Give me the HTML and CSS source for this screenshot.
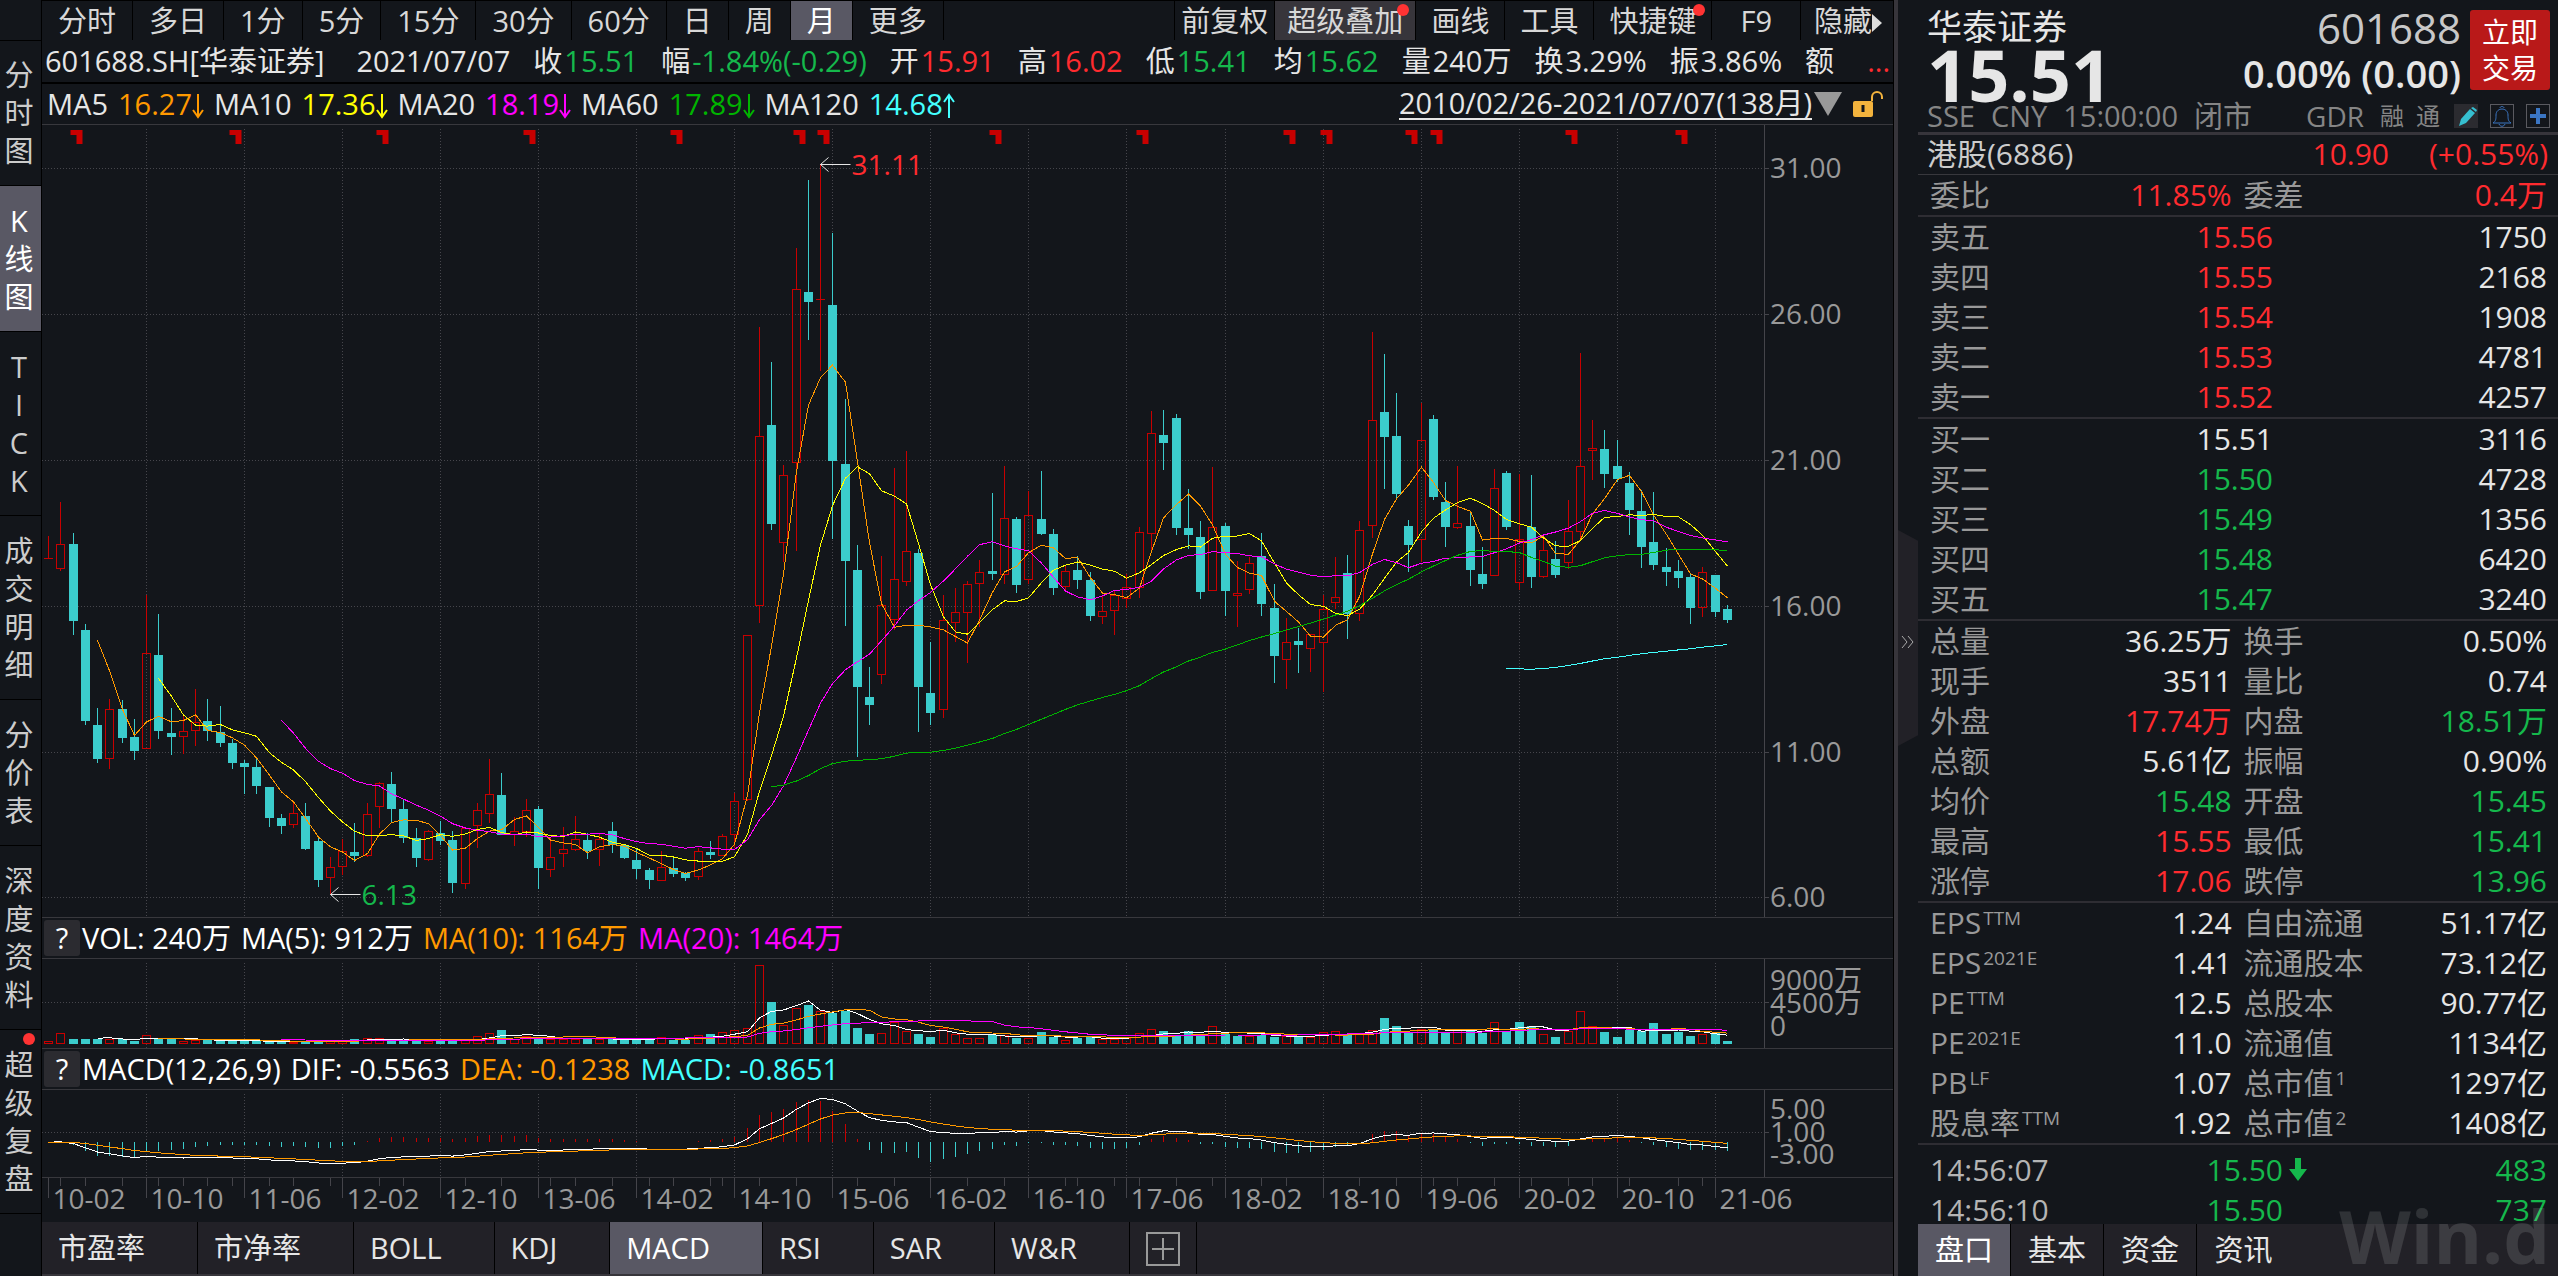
FILE: index.html
```html
<!DOCTYPE html>
<html lang="zh-CN">
<head>
    <meta charset="UTF-8">
    <meta name="viewport" content="width=device-width, initial-scale=1.0">
    <title>华泰证券 601688.SH</title>
    <link rel="stylesheet" href="styles.css">
</head>
<body>
    <svg class="defs" aria-hidden="true">
        <symbol id="down" viewBox="0 0 12 26"><path d="M6 1v23M1 17l5 7 5-7" fill="none" stroke="currentColor" stroke-width="2"/></symbol>
        <symbol id="up" viewBox="0 0 12 26"><path d="M6 25V2M1 9l5-7 5 7" fill="none" stroke="currentColor" stroke-width="2"/></symbol>
    </svg>

    <nav class="side">
        <button><span>分</span><span>时</span><span>图</span></button>
        <button class="active"><span>K</span><span>线</span><span>图</span></button>
        <button><span>T</span><span>I</span><span>C</span><span>K</span></button>
        <button><span>成</span><span>交</span><span>明</span><span>细</span></button>
        <button><span>分</span><span>价</span><span>表</span></button>
        <button><span>深</span><span>度</span><span>资</span><span>料</span></button>
        <button class="new"><span>超</span><span>级</span><span>复</span><span>盘</span></button>
    </nav>

    <main class="main">
        <div class="periods">
            <button>分时</button>
            <button>多日</button>
            <button>1分</button>
            <button>5分</button>
            <button>15分</button>
            <button>30分</button>
            <button>60分</button>
            <button>日</button>
            <button>周</button>
            <button class="active">月</button>
            <button>更多</button>
            <div class="tools">
                <button class="adjust">前复权</button>
                <button class="overlay new">超级叠加</button>
                <button>画线</button>
                <button>工具</button>
                <button class="new">快捷键</button>
                <button class="fkey">F9</button>
                <button class="hide">隐藏<svg width="10" height="18"><path d="M0 0l10 9-10 9z" fill="#ddd"/></svg></button>
            </div>
        </div>

        <div class="quote">
            <span>601688.SH[华泰证券]</span>
            <span class="date">2021/07/07</span>
            <span>收<b class="green">15.51</b></span>
            <span>幅<b class="green">-1.84%(-0.29)</b></span>
            <span>开<b class="red">15.91</b></span>
            <span>高<b class="red">16.02</b></span>
            <span>低<b class="green">15.41</b></span>
            <span>均<b class="green">15.62</b></span>
            <span>量<b>240万</b></span>
            <span>换<b>3.29%</b></span>
            <span>振<b>3.86%</b></span>
            <span>额</span>
            <span class="more red">...</span>
        </div>

        <div class="averages">
            <span>MA5</span><span class="ma5">16.27<svg width="12" height="26"><use href="#down"/></svg></span>
            <span>MA10</span><span class="ma10">17.36<svg width="12" height="26"><use href="#down"/></svg></span>
            <span>MA20</span><span class="ma20">18.19<svg width="12" height="26"><use href="#down"/></svg></span>
            <span>MA60</span><span class="ma60">17.89<svg width="12" height="26"><use href="#down"/></svg></span>
            <span>MA120</span><span class="ma120">14.68<svg width="12" height="26"><use href="#up"/></svg></span>
            <a class="range" href="#">2010/02/26-2021/07/07(138月)</a>
            <svg class="drop" width="28" height="24"><path d="M0 0h28L14 24z" fill="#999"/></svg>
            <svg class="lock" width="32" height="28"><path d="M20 11V7a5 5 0 0 1 10 0v2" fill="none" stroke="#f3b33d" stroke-width="2"/><rect x="1" y="11" width="20" height="16" rx="2" fill="#f3b33d"/><path d="M11 15v7" stroke="#13161b" stroke-width="3"/></svg>
        </div>

        <svg id="price" class="plot price"></svg>

        <div class="indicator">
            <button>?</button>
            <span>VOL: 240万</span>
            <span>MA(5): 912万</span>
            <span class="ma5">MA(10): 1164万</span>
            <span class="ma20">MA(20): 1464万</span>
        </div>
        <svg id="volume" class="plot volume"></svg>

        <div class="indicator">
            <button>?</button>
            <span>MACD(12,26,9)</span>
            <span>DIF: -0.5563</span>
            <span class="ma5">DEA: -0.1238</span>
            <span class="ma120">MACD: -0.8651</span>
        </div>
        <svg id="macd" class="plot macd"></svg>
        <svg id="dates" class="dates"></svg>

        <div class="studies">
            <button>市盈率</button>
            <button>市净率</button>
            <button>BOLL</button>
            <button>KDJ</button>
            <button class="active">MACD</button>
            <button>RSI</button>
            <button>SAR</button>
            <button>W&amp;R</button>
            <button class="add" aria-label="添加指标"><svg width="34" height="34"><path d="M1 1h32v32H1zM6 17h22M17 6v22" fill="none" stroke="#999" stroke-width="2"/></svg></button>
        </div>
    </main>

    <div class="splitter">
        <button aria-label="收起"><svg width="14" height="14"><path d="M1 1l5 6-5 6M7 1l5 6-5 6" fill="none" stroke="#aaa"/></svg></button>
    </div>

    <aside class="panel">
        <header class="head">
            <div class="info">
                <div class="line">
                    <h1>华泰证券</h1>
                    <span class="code">601688</span>
                </div>
                <div class="line last">
                    <span class="big">15.51</span>
                    <span class="change">0.00% (0.00)</span>
                </div>
            </div>
            <button class="trade">立即<br>交易</button>
            <div class="status">
                <span>SSE</span><span>CNY</span><span>15:00:00</span><span>闭市</span>
                <span class="gdr">GDR</span><span class="tag">融</span><span class="tag">通</span>
                <button aria-label="编辑" class="edit"><svg width="24" height="24"><path d="M4 21l2-7L15 4l5 4-9 10z" fill="#36bfd0"/><path d="M16 3l2-1 4 3-1 2z" fill="#36bfd0"/></svg></button>
                <button aria-label="提醒"><svg width="22" height="22"><path d="M2 18c3-2 3-4 3-8 0-4 3-6 6-6s6 2 6 6c0 4 0 6 3 8zM9 3c0-2 4-2 4 0M8 19c1 3 5 3 6 0" fill="none" stroke="#3b76c4" stroke-width="1"/></svg></button>
                <button aria-label="添加自选"><svg width="22" height="22"><path d="M11 3v16M3 11h16" stroke="#3b76c4" stroke-width="4"/></svg></button>
            </div>
        </header>

        <div class="hk"><span>港股(6886)</span><span class="red">10.90</span><span class="red pct">(+0.55%)</span></div>

        <table class="stats">
            <tr><th>委比</th><td class="red">11.85%</td><th>委差</th><td class="red">0.4万</td></tr>
        </table>
        <table class="book">
            <tr><th>卖五</th><td class="red">15.56</td><td>1750</td></tr>
            <tr><th>卖四</th><td class="red">15.55</td><td>2168</td></tr>
            <tr><th>卖三</th><td class="red">15.54</td><td>1908</td></tr>
            <tr><th>卖二</th><td class="red">15.53</td><td>4781</td></tr>
            <tr><th>卖一</th><td class="red">15.52</td><td>4257</td></tr>
        </table>
        <table class="book">
            <tr><th>买一</th><td>15.51</td><td>3116</td></tr>
            <tr><th>买二</th><td class="green">15.50</td><td>4728</td></tr>
            <tr><th>买三</th><td class="green">15.49</td><td>1356</td></tr>
            <tr><th>买四</th><td class="green">15.48</td><td>6420</td></tr>
            <tr><th>买五</th><td class="green">15.47</td><td>3240</td></tr>
        </table>
        <table class="stats">
            <tr><th>总量</th><td>36.25万</td><th>换手</th><td>0.50%</td></tr>
            <tr><th>现手</th><td>3511</td><th>量比</th><td>0.74</td></tr>
            <tr><th>外盘</th><td class="red">17.74万</td><th>内盘</th><td class="green">18.51万</td></tr>
            <tr><th>总额</th><td>5.61亿</td><th>振幅</th><td>0.90%</td></tr>
            <tr><th>均价</th><td class="green">15.48</td><th>开盘</th><td class="green">15.45</td></tr>
            <tr><th>最高</th><td class="red">15.55</td><th>最低</th><td class="green">15.41</td></tr>
            <tr><th>涨停</th><td class="red">17.06</td><th>跌停</th><td class="green">13.96</td></tr>
        </table>
        <table class="stats">
            <tr><th>EPS<sup>TTM</sup></th><td>1.24</td><th>自由流通</th><td>51.17亿</td></tr>
            <tr><th>EPS<sup>2021E</sup></th><td>1.41</td><th>流通股本</th><td>73.12亿</td></tr>
            <tr><th>PE<sup>TTM</sup></th><td>12.5</td><th>总股本</th><td>90.77亿</td></tr>
            <tr><th>PE<sup>2021E</sup></th><td>11.0</td><th>流通值</th><td>1134亿</td></tr>
            <tr><th>PB<sup>LF</sup></th><td>1.07</td><th>总市值<sup>1</sup></th><td>1297亿</td></tr>
            <tr><th>股息率<sup>TTM</sup></th><td>1.92</td><th>总市值<sup>2</sup></th><td>1408亿</td></tr>
        </table>
        <div class="ticks">
            <table>
                <tr><th>14:56:07</th><td class="green">15.50</td><td class="arrow"><svg width="18" height="24"><path d="M6 0h6v11h6l-9 12-9-12h6z" fill="#15b84c"/></svg></td><td class="green">483</td></tr>
                <tr><th>14:56:10</th><td class="green">15.50</td><td class="arrow"></td><td class="green">737</td></tr>
            </table>
        </div>
        <div class="tabs">
            <button class="active">盘口</button>
            <button>基本</button>
            <button>资金</button>
            <button>资讯</button>
        </div>
        <div class="watermark">Win.d</div>
    </aside>

    <script src="chart.js"></script>
</body>
</html>
```
FILE: styles.css
```css
* {
    box-sizing: border-box;
}
body {
    margin: 0;
    height: 100vh;
    display: flex;
    overflow: hidden;
    background-color: #13161b;
    color: #e6e6e6;
    font-family: "Open Sans", "Noto Sans CJK SC", sans-serif;
    font-size: 29px;
    line-height: 38px;
    white-space: nowrap;
}
button {
    padding: 0;
    border: none;
    background: none;
    color: inherit;
    font: inherit;
    cursor: pointer;
}
b {
    font-weight: normal;
}
.defs {
    display: none;
}
.red {
    color: #ff2b2f;
}
.green {
    color: #15b84c;
}
.ma5 {
    color: #ff9900;
}
.ma10 {
    color: #ffff00;
}
.ma20 {
    color: #ff00ff;
}
.ma60 {
    color: #00b400;
}
.ma120 {
    color: #44ffff;
}
.new {
    position: relative;
}
.new::after {
    content: "";
    position: absolute;
    top: 3px;
    right: 6px;
    width: 12px;
    height: 12px;
    border-radius: 50%;
    background-color: #ff3333;
}

/* left navigation */
.side {
    flex: 0 0 42px;
    padding-top: 40px;
    border-right: 1px solid #000;
    display: flex;
    flex-direction: column;
    color: #ccc;
}
.side button {
    padding: 16px 3px 15px 0;
    border-bottom: 1px solid #000;
    display: flex;
    flex-direction: column;
    align-items: center;
}
.side button:first-child {
    border-top: 1px solid #000;
    padding-top: 15px;
}
.active,
.side .active {
    background-color: #595864;
    color: #fff;
}

/* chart column */
.main {
    flex: 1;
    min-width: 0;
    display: flex;
    flex-direction: column;
}
.periods {
    height: 41px;
    padding-bottom: 1px;
    border-top: 1px solid #000;
    display: flex;
    color: #d8d8d8;
}
.periods button {
    padding: 0 16px;
    border-right: 1px solid #000;
}
.tools {
    margin-left: auto;
    display: flex;
}
.periods .tools button {
    padding: 0 15px;
    border-right: none;
    border-left: 1px solid #000;
}
.periods .tools .adjust {
    padding: 0 6px;
}
.periods .tools .overlay {
    padding: 0 12px;
    background-color: #37353b;
}
.periods .tools .fkey {
    padding: 0 28px;
}
.periods .tools .hide {
    padding: 0 11px 0 13px;
}
.quote {
    height: 43px;
    padding: 1px 3px 0;
    border-bottom: 2px solid #000;
    display: flex;
    gap: 23px;
}
.quote b {
    margin-left: 2px;
}
.quote .date {
    margin: 0 0 0 9px;
}
.quote .more {
    margin-left: auto;
}
.averages {
    height: 41px;
    padding: 0 9px 0 5px;
    border-bottom: 1px solid #38383d;
    display: flex;
    align-items: center;
    gap: 10px;
}
.averages span svg {
    vertical-align: -4px;
}
.range {
    margin-left: auto;
    color: inherit;
    line-height: 30px;
    text-decoration: none;
    border-bottom: 2px solid #e6e6e6;
}
.averages .drop {
    margin-left: -8px;
}
.plot,
.dates {
    display: block;
    width: 100%;
    font-size: 28px;
}
.price {
    flex: 1;
    min-height: 0;
}
.indicator {
    height: 42px;
    padding: 0 2px;
    border: solid #38383d;
    border-width: 1px 0;
    display: flex;
    align-items: center;
    gap: 10px;
    color: #fff;
}
.indicator button {
    width: 36px;
    height: 36px;
    margin-right: -8px;
    border-radius: 3px;
    background-color: #2b2b30;
    line-height: 36px;
}
.volume {
    height: 89px;
}
.macd {
    height: 87px;
}
.dates {
    height: 45px;
    border-top: 1px solid #38383d;
}
.studies {
    height: 54px;
    border-bottom: 2px solid #37353b;
    background-color: #222127;
    display: flex;
}
.studies button {
    padding: 0 52px 0 16px;
    border-right: 1px solid #000;
}
.studies .add {
    padding: 9px 16px 0;
}

/* chart drawing */
.axis {
    fill: #999;
}
.frame {
    stroke: #44444a;
}
.grid {
    stroke: #46464c;
    stroke-dasharray: 1 2;
}
.rise {
    fill: none;
    stroke: #c80000;
}
.flag {
    fill: #c80000;
}
.fall {
    stroke: #3bcccc;
}
.solid {
    fill: #3bcccc;
}
.curve {
    fill: none;
    stroke: currentColor;
    shape-rendering: crispEdges;
}
.white {
    color: #fff;
}
.pointer {
    fill: none;
    stroke: #e6e6e6;
}
.high {
    fill: #ff2b2f;
}
.low {
    fill: #15b84c;
}

/* splitter between chart and quote panel */
.splitter {
    flex: 0 0 25px;
    border-left: 1px solid #000;
    display: flex;
    align-items: center;
    background: linear-gradient(#37353b, #37353b) 0 0 / 4px 100% no-repeat;
}
.splitter button {
    width: 20px;
    height: 216px;
    margin-left: 4px;
    background-color: #222127;
    clip-path: polygon(0 0, 100% 5%, 100% 95%, 0 100%);
}

/* quote panel */
.panel {
    position: relative;
    flex: 0 0 640px;
    display: flex;
    flex-direction: column;
    font-size: 30px;
    line-height: 40px;
}
.head {
    height: 135px;
    padding: 6px 8px 0 9px;
    border-bottom: 3px solid #37353b;
    display: grid;
    grid-template-columns: 1fr 80px;
    grid-template-rows: 92px 1fr;
    column-gap: 9px;
}
.line {
    display: flex;
    justify-content: space-between;
    height: 44px;
}
.line.last {
    line-height: 48px;
}
h1 {
    margin: 0;
    font-size: 35px;
    font-weight: normal;
    line-height: 42px;
}
.code {
    font-size: 42px;
    line-height: 44px;
    color: #c8c8c8;
}
.big {
    font-size: 72px;
    font-weight: bold;
}
.change {
    font-size: 38px;
    font-weight: 600;
    line-height: 46px;
}
.trade {
    height: 80px;
    margin-top: 4px;
    border-radius: 3px;
    background-color: #b91919;
    color: #fff;
    font-size: 28px;
    line-height: 36px;
}
.status {
    grid-column: 1 / 3;
    display: flex;
    align-items: center;
    gap: 16px;
    font-size: 29px;
    line-height: 36px;
    color: #858585;
}
.status .gdr {
    margin-left: auto;
    font-size: 28px;
}
.status .tag {
    margin-right: -4px;
    font-size: 24px;
}
.status button {
    width: 24px;
    height: 24px;
    margin-right: -4px;
    border: 1px solid #5a5a60;
    line-height: 0;
}
.status .edit {
    margin-left: 2px;
    background-color: #2b2b30;
    border-color: #2b2b30;
}
.status button:last-child {
    margin-right: 0;
}
.hk {
    height: 40px;
    padding: 0 10px 0 9px;
    border-bottom: 1px solid #38383d;
    display: flex;
    line-height: 38px;
    color: #ccc;
}
.hk .red:nth-child(2) {
    margin-left: auto;
}
.hk .pct {
    margin-left: 40px;
}
table {
    width: 100%;
    border-collapse: collapse;
    table-layout: fixed;
}
th,
td {
    height: 40px;
    padding: 0;
    font-weight: normal;
    text-align: right;
}
th {
    padding-left: 12px;
    text-align: left;
    color: #999;
}
td:last-child {
    padding-right: 11px;
}
.stats,
.book {
    flex: none;
    border-bottom: 2px solid #2e2d33;
}
.stats th {
    width: 30%;
}
.stats td {
    width: 19%;
}
.stats td:last-child {
    width: 21%;
}
.book th,
.ticks th {
    width: 180px;
}
.book td:nth-child(2) {
    width: 175px;
}
sup {
    margin-left: 2px;
    font-size: 19px;
    line-height: 0;
    vertical-align: 9px;
}
.ticks {
    flex: 1;
    min-height: 0;
    padding-top: 5px;
    overflow: hidden;
}
.ticks td:nth-child(2) {
    width: 185px;
}
.ticks .arrow {
    width: 24px;
    line-height: 0;
}
.ticks th {
    color: #b4b4b4;
}
.tabs {
    flex: 0 0 52px;
    display: flex;
    background-color: #222127;
}
.tabs button {
    width: 93px;
    border-right: 1px solid #000;
    font-size: 29px;
}
.tabs button:last-child {
    border-right: none;
}
.watermark {
    position: absolute;
    right: 8px;
    bottom: 10px;
    font-size: 74px;
    font-weight: bold;
    line-height: 60px;
    color: rgba(255, 255, 255, 0.12);
    pointer-events: none;
}
```
FILE: chart.js
```js
// One month per row: direction, high, body top, body bottom, low.
// Levels are stored as scale units counted downwards, 29.17 units to 1 yuan.
const months = [
    [1,536,558,558,558],[1,502,544,568,571],[0,533,544,621,635],[0,624,630,721,725],[0,708,725,759,763],[1,699,709,758,769],
    [0,700,709,738,743],[0,719,737,751,760],[1,595,653,748,749],[0,614,655,731,739],[0,708,733,737,755],[1,716,731,736,754],
    [1,689,722,730,746],[0,699,721,731,741],[0,706,732,743,747],[0,739,743,763,769],[0,760,763,767,794],[0,758,767,786,794],
    [0,787,787,818,827],[0,814,818,826,834],[1,803,813,824,828],[0,803,816,849,850],[0,838,841,880,887],[1,857,867,877,894],
    [1,839,851,866,875],[0,823,852,856,862],[1,803,814,855,857],[1,782,783,806,828],[0,772,784,809,823],[0,799,809,838,843],
    [0,828,838,858,867],[1,830,831,859,861],[0,821,833,841,845],[0,831,840,883,893],[1,827,828,883,889],[1,803,810,825,848],
    [1,759,794,813,823],[0,773,795,835,835],[1,817,831,834,846],[1,799,810,831,837],[0,806,809,868,889],[1,838,857,869,877],
    [1,827,849,853,867],[1,816,839,849,851],[0,833,840,851,859],[1,833,839,849,866],[0,822,831,845,853],[0,844,845,858,859],
    [0,849,860,869,879],[0,868,870,880,889],[1,851,867,880,880],[0,857,868,874,877],[0,872,873,878,881],[1,848,851,876,880],
    [0,841,852,855,859],[1,834,836,855,856],[1,793,801,834,848],[1,635,635,799,801],[1,327,436,605,623],[0,362,425,524,530],
    [1,465,475,542,562],[1,248,289,462,551],[0,180,292,302,340],[1,164,299,299,371],[0,233,305,461,539],[0,399,464,561,626],
    [0,545,570,687,757],[0,667,697,705,725],[1,556,605,674,684],[1,468,579,619,630],[1,451,551,581,586],[0,549,553,687,732],
    [0,642,693,713,725],[1,595,620,709,718],[1,588,612,622,642],[1,581,584,612,663],[1,560,572,583,627],[0,493,571,574,580],
    [1,466,518,574,584],[0,517,519,585,593],[1,491,515,579,584],[0,471,519,534,535],[0,529,534,588,595],[1,565,571,586,592],
    [0,556,570,580,589],[0,572,580,616,621],[1,595,611,616,624],[1,591,595,610,635],[1,574,587,598,608],[1,527,532,587,598],
    [1,411,433,533,552],[0,410,435,443,470],[0,414,418,528,535],[0,489,528,535,549],[0,521,537,592,599],[1,467,527,590,590],
    [0,523,526,591,616],[1,561,593,595,627],[1,557,563,589,594],[0,533,556,604,616],[0,584,608,656,683],[1,618,642,659,689],
    [0,628,641,645,673],[1,634,634,648,672],[1,595,609,642,692],[1,557,597,602,609],[0,555,573,614,639],[1,521,530,613,621],
    [1,332,420,525,538],[0,354,412,437,489],[0,393,436,494,500],[0,520,526,545,572],[1,403,440,539,562],[0,415,419,497,500],
    [0,482,502,527,547],[1,466,523,527,529],[0,513,526,570,586],[0,547,574,584,589],[1,469,488,575,575],[0,471,473,527,530],
    [1,474,539,582,590],[0,475,527,577,588],[1,539,550,576,578],[0,541,559,575,578],[1,500,531,562,569],[1,353,466,531,539],
    [1,420,448,450,480],[0,430,449,474,488],[0,440,466,479,482],[0,472,483,510,535],[0,490,511,547,568],[0,492,542,565,570],
    [0,548,567,572,586],[0,560,571,578,588],[0,573,577,608,624],[1,567,572,607,617],[0,575,575,612,617],[0,605,609,620,623]
];

// monthly volume, in units of 108万
const volumes = [
    3,11,5,5,5,5,5,3,9,5,5,3,4,4,3,3,3,3,2,2,2,3,3,3,3,5,6,6,4,4,4,3,3,3,5,8,11,14,5,8,6,5,5,5,5,5,5,4,5,5,
    7,4,4,9,10,12,14,16,79,42,19,36,39,33,31,33,16,10,11,22,13,10,7,16,10,6,6,9,9,6,6,12,7,4,6,7,5,5,6,11,
    15,13,8,13,10,18,10,8,8,9,7,8,8,7,12,13,10,10,14,26,18,11,15,14,11,14,13,11,22,13,22,18,10,7,13,33,18,
    12,7,14,13,21,10,12,8,10,11,3
];

const labels = ['10-02', '10-10', '11-06', '12-02', '12-10', '13-06', '14-02', '14-10', '15-06',
    '16-02', '16-10', '17-06', '18-02', '18-10', '19-06', '20-02', '20-10', '21-06'];
const minorTicks = [1, 3, 6, 9, 11, 13, 15, 18, 20, 23, 27, 29, 32, 34, 37, 41, 43, 46, 49, 51, 54, 55, 58, 61, 66,
    69, 75, 78, 83, 84, 87, 89, 92, 95, 99, 101, 107, 110, 113, 115, 118, 121, 124, 126, 129, 133, 135];
const flags = [2, 15, 27, 39, 51, 61, 63, 77, 89, 101, 104, 111, 113, 124, 133];

const toPrice = level => 31 - (level - 168.3) / 29.17;
const candles = months.map(([up, high, top, bottom, low]) => ({
    up,
    high: toPrice(high),
    top: toPrice(top),
    bottom: toPrice(bottom),
    low: toPrice(low),
    close: toPrice(up ? top : bottom)
}));
const closes = candles.map(c => c.close);

function average(values, n) {
    return values.map((v, i) => i < n - 1 ? null : values.slice(i - n + 1, i + 1).reduce((a, b) => a + b, 0) / n);
}

function ema(values, n) {
    let last = values[0];
    return values.map(v => last = last + (v - last) * 2 / (n + 1));
}

const fast = ema(closes, 12);
const slow = ema(closes, 26);
const dif = fast.map((v, i) => v - slow[i]);
const dea = ema(dif, 9);

const AXIS = 129; // room for the scale on the right

function stepOf(width) {
    return (width - AXIS - 43) / (candles.length - 1);
}

function xAt(i, width) {
    return Math.floor(6.5 + i * stepOf(width)) + 0.5;
}

function line(x1, y1, x2, y2, cls) {
    return `<path class="${cls}" shape-rendering="crispEdges" d="M${x1} ${y1}L${x2} ${y2}"/>`;
}

function bar(x, top, bottom, up) {
    const h = Math.max(bottom - top, 1);
    if (up) {
        return `<rect class="rise" shape-rendering="crispEdges" x="${x - 4}" y="${top + 0.5}" width="8" height="${h}"/>`;
    }
    return `<rect class="solid" shape-rendering="crispEdges" x="${x - 4.5}" y="${top}" width="9" height="${h}"/>`;
}

function curve(values, y, width, cls) {
    const points = [];
    values.forEach((v, i) => {
        if (v !== null) points.push(`${xAt(i, width)},${y(v).toFixed(1)}`);
    });
    return `<polyline class="curve ${cls}" points="${points.join(' ')}"/>`;
}

function grid(width, height, levels) {
    let out = '';
    for (let i = 8; i < candles.length; i += 8) {
        out += line(xAt(i, width), 4, xAt(i, width), height, 'grid');
    }
    levels.forEach(y => {
        out += line(0, y, width - AXIS, y, 'grid') + line(width - AXIS, y, width - AXIS + 5, y, 'frame');
    });
    return out + line(width - AXIS + 0.5, 0, width - AXIS + 0.5, height, 'frame');
}

function text(x, y, value, cls) {
    return `<text class="${cls}" x="${x}" y="${y + 10}">${value}</text>`;
}

function pointer(x, y, value, cls) {
    return `<path class="pointer" d="M${x + 30} ${y}H${x}M${x + 8} ${y - 7}L${x} ${y}L${x + 8} ${y + 7}"/>` + text(x + 31, y, value, cls);
}

function drawPrice() {
    const svg = document.getElementById('price');
    const w = svg.clientWidth;
    const h = svg.clientHeight;
    const y = p => (32.48 - p) / 27.15 * h;
    const scale = [31, 26, 21, 16, 11, 6];
    let out = grid(w, h, scale.map(p => Math.round(y(p)) + 0.5));
    scale.forEach(p => out += text(w - AXIS + 6, y(p), p.toFixed(2), 'axis'));
    flags.forEach(i => {
        const x = xAt(i, w) - 3;
        out += `<path class="flag" d="M${x} 5h12v14h-6v-9h-6z"/>`;
    });
    candles.forEach((c, i) => {
        const x = xAt(i, w);
        const cls = c.up ? 'rise' : 'fall';
        const top = Math.round(y(c.top));
        const bottom = Math.round(y(c.bottom));
        if (top === bottom) {
            out += line(x, y(c.high), x, y(c.low), cls) + line(x - 4.5, top + 0.5, x + 4.5, top + 0.5, cls);
            return;
        }
        out += line(x, y(c.high), x, top, cls) + line(x, bottom, x, y(c.low), cls) + bar(x, top, bottom, c.up);
    });
    [5, 10, 20, 60, 120].forEach(n => out += curve(average(closes, n), y, w, 'ma' + n));
    out += pointer(xAt(63, w), Math.round(y(31.11)) - 0.5, '31.11', 'high');
    out += pointer(xAt(23, w), Math.round(y(6.13)) + 0.5, '6.13', 'low');
    svg.innerHTML = out;
}

function drawVolume() {
    const svg = document.getElementById('volume');
    const w = svg.clientWidth;
    const h = svg.clientHeight;
    const base = h - 4;
    const y = v => base - v;
    let out = grid(w, h, [Math.round(y(42)) + 0.5]);
    out += text(w - AXIS + 6, 21, '9000万', 'axis') + text(w - AXIS + 6, 44, '4500万', 'axis') + text(w - AXIS + 6, 67, '0', 'axis');
    volumes.forEach((v, i) => {
        const up = i === 0 || closes[i] >= closes[i - 1];
        out += bar(xAt(i, w), y(v), up ? base - 1 : base, up);
    });
    out += curve(average(volumes, 5), y, w, 'white') + curve(average(volumes, 10), y, w, 'ma5') + curve(average(volumes, 20), y, w, 'ma20');
    svg.innerHTML = out;
}

function drawMacd() {
    const svg = document.getElementById('macd');
    const w = svg.clientWidth;
    const h = svg.clientHeight;
    const y = v => h * 0.6 - v * 10;
    let out = grid(w, h, [Math.round(y(1)) + 0.5]);
    out += text(w - AXIS + 6, 19, '5.00', 'axis') + text(w - AXIS + 6, 42, '1.00', 'axis') + text(w - AXIS + 6, 64, '-3.00', 'axis');
    dif.forEach((v, i) => {
        const hist = 2 * (v - dea[i]);
        out += line(xAt(i, w), y(0), xAt(i, w), y(hist), hist > 0 ? 'rise' : 'fall');
    });
    out += curve(dif, y, w, 'white') + curve(dea, y, w, 'ma5');
    svg.innerHTML = out;
}

function drawDates() {
    const svg = document.getElementById('dates');
    const w = svg.clientWidth;
    let out = '';
    labels.forEach((label, i) => {
        const x = xAt(i * 8, w);
        out += line(x, 0, x, 20, 'frame') + text(x + 4, 21, label, 'axis');
    });
    minorTicks.forEach(i => out += line(xAt(i, w), 0, xAt(i, w), 8, 'frame'));
    svg.innerHTML = out;
}

function draw() {
    drawPrice();
    drawVolume();
    drawMacd();
    drawDates();
}

draw();
window.addEventListener('resize', draw);
```
